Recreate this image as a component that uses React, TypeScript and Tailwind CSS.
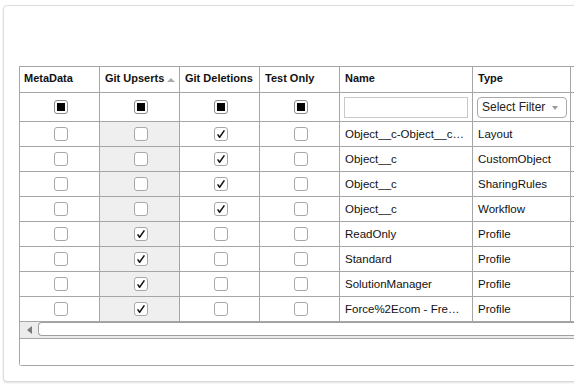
import React from 'react'

type Row = {
  meta: boolean
  upsert: boolean
  del: boolean
  test: boolean
  name: string
  type: string
}

const rows: Row[] = [
  { meta: false, upsert: false, del: true, test: false, name: 'Object__c-Object__c…', type: 'Layout' },
  { meta: false, upsert: false, del: true, test: false, name: 'Object__c', type: 'CustomObject' },
  { meta: false, upsert: false, del: true, test: false, name: 'Object__c', type: 'SharingRules' },
  { meta: false, upsert: false, del: true, test: false, name: 'Object__c', type: 'Workflow' },
  { meta: false, upsert: true, del: false, test: false, name: 'ReadOnly', type: 'Profile' },
  { meta: false, upsert: true, del: false, test: false, name: 'Standard', type: 'Profile' },
  { meta: false, upsert: true, del: false, test: false, name: 'SolutionManager', type: 'Profile' },
  { meta: false, upsert: true, del: false, test: false, name: 'Force%2Ecom - Fre…', type: 'Profile' }
]

function CheckBox({ checked }: { checked: boolean }): React.JSX.Element {
  return (
    <span className="flex h-[14px] w-[14px] items-center justify-center rounded-[3px] border border-[#a8a8a8] bg-white">
      {checked ? (
        <svg width="12" height="12" viewBox="0 0 12 12">
          <path d="M2.6 6.4 L4.6 9.2 L9.4 2.4" fill="none" stroke="#111" strokeWidth="1.5" strokeLinejoin="round" />
        </svg>
      ) : null}
    </span>
  )
}

function FilterBox(): React.JSX.Element {
  return (
    <span className="flex h-[14px] w-[14px] items-center justify-center rounded-[3px] border border-[#8c8c8c] bg-white">
      <span className="h-[8px] w-[8px] bg-black" />
    </span>
  )
}

const cell = 'h-full shrink-0 border-r border-[#a6a6a6]'
const boxCell = `${cell} flex items-center justify-center pl-[2px]`

export default function App(): React.JSX.Element {
  return (
    <div className="h-[387px] w-[574px] overflow-hidden bg-white font-['Liberation_Sans',Arial,sans-serif] text-[#111]">
      <div className="ml-[3px] mt-[5px] h-[377px] w-[640px] rounded-[4px] border border-[#dcdcdc] bg-white shadow-[0_1px_2px_rgba(0,0,0,0.12)]">
        <div className="ml-[15px] mt-[60px] w-[640px] rounded-bl-[3px] border-y border-l border-[#a6a6a6]">
          {/* header */}
          <div className="flex h-[26px] border-b border-[#a6a6a6] text-[11px] font-bold leading-[13px]">
            <div className={`${cell} w-[80px] pl-[4px] pt-[5px]`}>MetaData</div>
            <div className={`${cell} flex w-[80px] pl-[5px] pt-[5px]`}>
              <span>Git Upserts</span>
              <span className="ml-[3px] mt-[6px] h-0 w-0 border-x-[4.5px] border-b-[4px] border-x-transparent border-b-[#ababab]" />
            </div>
            <div className={`${cell} w-[80px] pl-[5px] pt-[5px]`}>Git Deletions</div>
            <div className={`${cell} w-[80px] pl-[5px] pt-[5px]`}>Test Only</div>
            <div className={`${cell} w-[133px] pl-[5px] pt-[5px]`}>Name</div>
            <div className={`${cell} w-[98px] pl-[5px] pt-[5px]`}>Type</div>
            <div className={`${cell} w-[100px]`} />
          </div>

          {/* filters */}
          <div className="flex h-[29px] border-b border-[#a6a6a6]">
            <div className={`${boxCell} w-[80px]`}>
              <FilterBox />
            </div>
            <div className={`${boxCell} w-[80px]`}>
              <FilterBox />
            </div>
            <div className={`${boxCell} w-[80px]`}>
              <FilterBox />
            </div>
            <div className={`${boxCell} w-[80px]`}>
              <FilterBox />
            </div>
            <div className={`${cell} flex w-[133px] items-center pl-[4px]`}>
              <input
                aria-label="Name filter"
                className="h-[21px] w-[124px] border border-[#c9c9c9] bg-white outline-none"
              />
            </div>
            <div className={`${cell} flex w-[98px] items-center pl-[4px]`}>
              <div className="flex h-[21px] w-[90px] items-center rounded-[4px] border border-[#a9a9a9] bg-white pl-[4px] text-[12px] text-[#222]">
                <span>Select Filter</span>
                <span className="ml-[7px] mt-[1px] h-0 w-0 border-x-[3.5px] border-t-[4px] border-x-transparent border-t-[#9a9a9a]" />
              </div>
            </div>
            <div className={`${cell} w-[100px]`} />
          </div>

          {/* rows */}
          {rows.map((r, i) => (
            <div key={i} className="flex h-[25px] border-b border-[#a6a6a6] text-[11.5px] leading-[14px]">
              <div className={`${boxCell} w-[80px]`}>
                <CheckBox checked={r.meta} />
              </div>
              <div className={`${boxCell} w-[80px] bg-[#efefef]`}>
                <CheckBox checked={r.upsert} />
              </div>
              <div className={`${boxCell} w-[80px]`}>
                <CheckBox checked={r.del} />
              </div>
              <div className={`${boxCell} w-[80px]`}>
                <CheckBox checked={r.test} />
              </div>
              <div className={`${cell} flex w-[133px] items-center pl-[5px]`}>
                <span className="whitespace-nowrap">{r.name}</span>
              </div>
              <div className={`${cell} flex w-[98px] items-center pl-[5px]`}>{r.type}</div>
              <div className={`${cell} w-[100px]`} />
            </div>
          ))}

          {/* horizontal scrollbar */}
          <div className="flex h-[16px] items-start bg-[#ececec]">
            <div className="flex h-[16px] w-[18px] items-center justify-center">
              <span className="h-0 w-0 border-y-[4px] border-r-[5px] border-y-transparent border-r-[#7a7a7a]" />
            </div>
            <div className="h-[14px] flex-1 rounded-l-[4px] border border-r-0 border-[#a0a0a0] bg-white" />
          </div>

          {/* footer */}
          <div className="h-[27px] border-t border-[#a6a6a6] bg-white" />
        </div>
      </div>
    </div>
  )
}
